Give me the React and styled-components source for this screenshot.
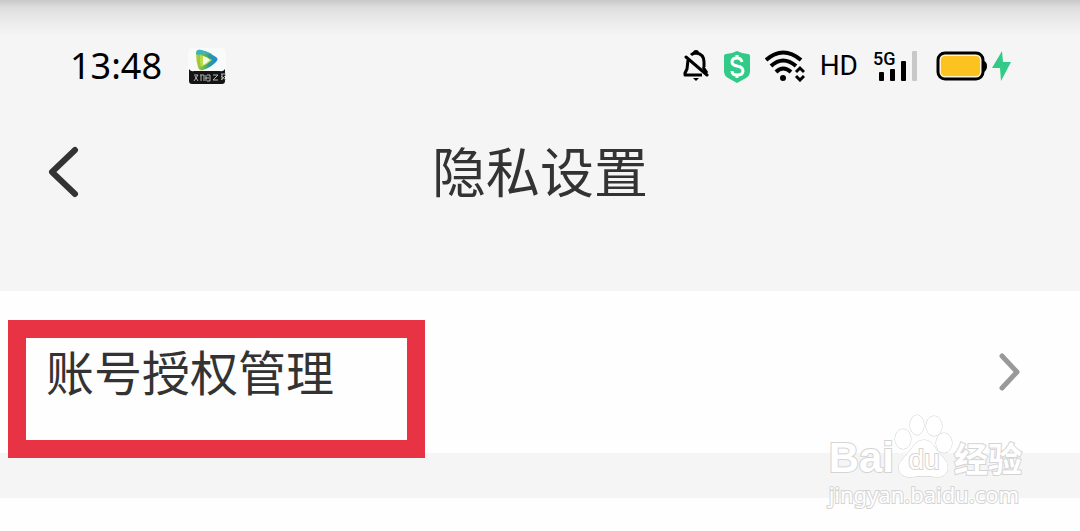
import React from "react";
import styled, { createGlobalStyle } from "styled-components";

const App = () => {
  return (
    <Page>
      <GlobalStyle />
      <Header>
        <StatusBar>
          <StatusGroup gap="26px">
            <Time>13:48</Time>
            <VideoIcon />
          </StatusGroup>
          <StatusGroup gap="15px">
            <BellOffIcon />
            <ShieldIcon />
            <WifiIcon />
            <Network>HD</Network>
            <Signal>
              <SignalLabel>5G</SignalLabel>
              <SignalBars />
            </Signal>
            <BatteryIcon />
          </StatusGroup>
        </StatusBar>
        <TitleBar>
          <BackButton type="button" aria-label="返回">
            <svg width="32" height="52" viewBox="0 0 32 52">
              <path
                d="M27 4 4 26l23 22"
                fill="none"
                stroke="#333"
                strokeWidth="6"
                strokeLinecap="round"
                strokeLinejoin="round"
              />
            </svg>
          </BackButton>
          <Title>隐私设置</Title>
          <div></div>
        </TitleBar>
      </Header>
      <Main>
        <Row type="button">
          <RowLabel>账号授权管理</RowLabel>
          <svg width="24" height="40" viewBox="0 0 24 40">
            <path
              d="M4 4l15 16L4 36"
              fill="none"
              stroke="#999"
              strokeWidth="5"
              strokeLinecap="round"
              strokeLinejoin="round"
            />
          </svg>
          <Highlight />
        </Row>
        <Divider />
      </Main>
      <Watermark>
        <Brand>
          <BrandName>Bai</BrandName>
          <Paw>
            <PawIcon />
            <PawText>du</PawText>
          </Paw>
          <BrandChinese>经验</BrandChinese>
        </Brand>
        <BrandUrl>jingyan.baidu.com</BrandUrl>
      </Watermark>
    </Page>
  );
};

export default App;

const VideoIcon = () => (
  <svg width="38" height="38" viewBox="0 -3 38 38">
    <defs>
      <linearGradient id="play" x1="0" y1="0" x2="1" y2="0">
        <stop offset="0" stopColor="#c3cc3a" />
        <stop offset="0.35" stopColor="#6db84c" />
        <stop offset="0.6" stopColor="#2f9a98" />
        <stop offset="1" stopColor="#2487d8" />
      </linearGradient>
    </defs>
    <rect y="-2" width="38" height="36" rx="5" fill="#f9fafa" />
    <path
      d="M8 4q0-5 5-4 8 2 15 7 3 2 0 5-6 6-13 8-4 1-5-3-2-6-2-13z"
      fill="url(#play)"
    />
    <path d="M8 4q0-5 5-4 6 1 11 4-8-1-14 1z" fill="#38b4c8" />
    <path d="M12 5q6 1 12 5-4 4-11 7-2-6-1-12z" fill="#b9dc4a" />
    <path d="M15 6q4 1 7 4-3 3-7 5z" fill="#f4fae0" />
    <path
      d="M1 19q2 3 5 2h26q3 1 5-2v12q0 3-3 3H4q-3 0-3-3z"
      fill="#141414"
    />
    <path
      d="M6 25h4l-4 6m1-5 3 5m3-6v6m-1-6h4v6m2-6v6m-1-3h4m-2-3h3v6h-3m6-6h5l-5 5h5m3-6h5m-4 0v6m4-5-5 5m0-4 5 4"
      fill="none"
      stroke="#b5b5b5"
      strokeWidth="1"
    />
  </svg>
);

const BellOffIcon = () => (
  <svg width="26" height="32" viewBox="0 0 26 32">
    <path
      d="M8 5q2-2 5-2 8 1 8 9v5M5 10l-1 9-2 4v2h17M20 17l4 6"
      fill="none"
      stroke="#000"
      strokeWidth="3"
      strokeLinejoin="round"
    />
    <path d="M3 7l21 18" stroke="#000" strokeWidth="3" strokeLinecap="round" />
    <path d="M10 28h6l-3 3z" fill="#000" />
    <path d="M10 3q0-3 3-3t3 3z" fill="#000" />
  </svg>
);

const ShieldIcon = () => (
  <svg width="26" height="33" viewBox="1 0 26 33">
    <path
      d="M14 1q6 3 11 3 2 0 2 2v15q0 5-4 7l-9 5-9-5q-4-2-4-7V6q0-2 2-2 5 0 11-3z"
      fill="#31cb87"
    />
    <path
      d="M19 12q-1-4-5-4-5 0-5 4 0 3 5 4 6 1 6 5 0 4-6 4-5 0-5-4M14 5v4m0 15v4"
      fill="none"
      stroke="#fff"
      strokeWidth="3"
    />
  </svg>
);

const WifiIcon = () => (
  <svg width="40" height="32" viewBox="1 0 40 32">
    <g fill="none" stroke="#000" strokeWidth="4">
      <path d="M2 10q17-15 35 0" />
      <path d="M7 16q12-11 25 0" />
      <path d="M12 22q7-7 15 0" />
    </g>
    <circle cx="19" cy="28" r="3" fill="#000" />
    <path
      d="M32 22l4-4 4 4M32 26l4 4 4-4"
      fill="none"
      stroke="#000"
      strokeWidth="3"
    />
  </svg>
);

const SignalBars = () => (
  <svg width="48" height="32" viewBox="0 0 48 32">
    <rect x="6" y="22" width="5" height="9" rx="1" fill="#000" />
    <rect x="17" y="19" width="5" height="12" rx="1" fill="#000" />
    <rect x="28" y="11" width="5" height="20" rx="1" fill="#000" />
    <rect x="39" y="1" width="5" height="30" rx="1" fill="#c8c8c8" />
  </svg>
);

const BatteryIcon = () => (
  <svg width="76" height="32" viewBox="0 0 76 32">
    <rect
      x="2"
      y="3"
      width="45"
      height="26"
      rx="7"
      fill="#fff3d2"
      stroke="#000"
      strokeWidth="3"
    />
    <rect x="5" y="6" width="39" height="20" rx="4" fill="#fcc21f" />
    <path d="M48 11q3 1 3 5t-3 6z" fill="#000" />
    <path d="M66 1 56 18h8l1 13 10-19h-8l-1-11z" fill="#31cb87" />
  </svg>
);

const PawIcon = () => (
  <svg width="60" height="64" viewBox="0 0 60 64">
    <g fill="#fff" stroke="#d0d0d0" strokeWidth="1">
      <ellipse cx="9" cy="25" rx="8" ry="10" />
      <ellipse cx="23" cy="11" rx="7" ry="10" />
      <ellipse cx="40" cy="12" rx="8" ry="10" />
      <ellipse cx="50" cy="29" rx="8" ry="10" />
      <path d="M30 26q7 0 12 9l9 11q4 5 2 11-3 7-11 6-12-2-24 0-11 1-13-7-1-6 3-10l10-12q5-8 12-8z" />
    </g>
  </svg>
);

const GlobalStyle = createGlobalStyle`
  * {
    box-sizing: border-box;
  }
  body {
    margin: 0;
    background: #fefefe;
    font-family: "Noto Sans", "Noto Sans CJK SC", sans-serif;
  }
  svg {
    display: block;
    flex-shrink: 0;
  }
  button {
    border: none;
    background: none;
    font: inherit;
    cursor: pointer;
  }
`;
const Page = styled.div`
  position: relative;
  width: 100%;
`;
const Header = styled.header`
  padding: 40px 0 80px;
  background: linear-gradient(#c8c8c8, #dedede 8px, #ececec 22px, #f5f5f5 36px);
`;
const StatusBar = styled.div`
  display: flex;
  align-items: center;
  justify-content: space-between;
  height: 52px;
  padding: 0 68px 0 70px;
`;
const StatusGroup = styled.div`
  display: flex;
  align-items: center;
  gap: ${(props) => props.gap};
`;
const Time = styled.span`
  font-size: 36px;
  line-height: 52px;
  color: #000;
`;
const Network = styled.span`
  font-family: Roboto, sans-serif;
  font-size: 28px;
  line-height: 52px;
`;
const Signal = styled.div`
  position: relative;
`;
const SignalLabel = styled.span`
  position: absolute;
  top: 0;
  left: 0;
  font-family: Roboto, sans-serif;
  font-size: 18px;
  font-weight: 500;
  line-height: 18px;
`;
const TitleBar = styled.div`
  display: grid;
  grid-template-columns: 1fr auto 1fr;
  align-items: center;
  height: 119px;
  padding: 40px 48px 0;
`;
const BackButton = styled.button`
  justify-self: start;
  padding: 0;
`;
const Title = styled.h1`
  margin: 0;
  padding-bottom: 4px;
  font-family: "Noto Sans CJK SC", sans-serif;
  font-size: 54px;
  font-weight: normal;
  line-height: 72px;
  color: #333;
`;
const Main = styled.main`
  padding-bottom: 33px;
`;
const Row = styled.button`
  position: relative;
  display: flex;
  align-items: center;
  justify-content: space-between;
  width: 100%;
  padding: 43px 58px 43px 46px;
  background: #fefefe;
`;
const RowLabel = styled.span`
  padding-bottom: 4px;
  font-family: "Noto Sans CJK SC", sans-serif;
  font-size: 48px;
  line-height: 72px;
  color: #333;
`;
const Highlight = styled.span`
  position: absolute;
  top: 29px;
  left: 8px;
  width: 417px;
  height: 138px;
  border: 18px solid #e83345;
`;
const Divider = styled.div`
  height: 45px;
  background: #f5f5f5;
`;
const Watermark = styled.div`
  position: absolute;
  right: 58px;
  bottom: 21px;
  color: #fff;
  -webkit-text-stroke: 2px #d4d4d4;
  paint-order: stroke fill;
`;
const Brand = styled.div`
  display: flex;
  align-items: flex-end;
`;
const BrandName = styled.span`
  font-family: "Liberation Sans", sans-serif;
  font-size: 42px;
  font-weight: bold;
  line-height: 40px;
`;
const Paw = styled.span`
  position: relative;
`;
const PawText = styled.span`
  position: absolute;
  right: 0;
  bottom: 4px;
  left: 0;
  font-family: "Liberation Sans", sans-serif;
  font-size: 28px;
  line-height: 28px;
  text-align: center;
`;
const BrandChinese = styled.span`
  font-family: "Noto Sans CJK SC", sans-serif;
  font-size: 34px;
  font-weight: bold;
  line-height: 40px;
`;
const BrandUrl = styled.div`
  font-size: 22px;
  line-height: 32px;
`;
